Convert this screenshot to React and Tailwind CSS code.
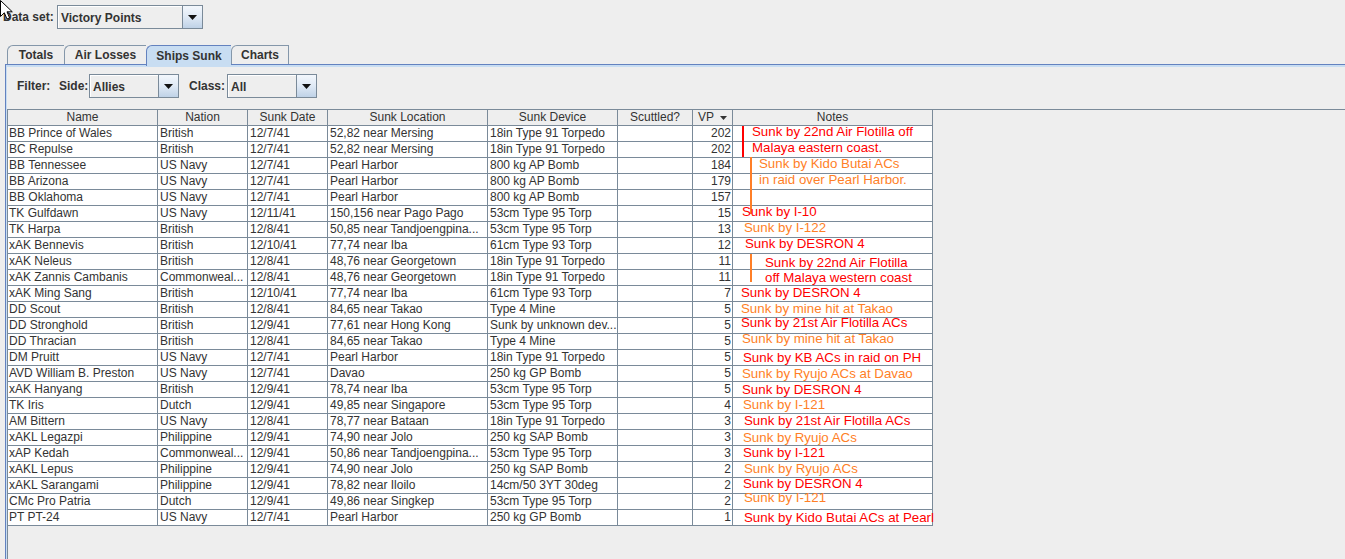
const ROWS = [
  ['BB Prince of Wales', 'British', '12/7/41', '52,82 near Mersing', '18in Type 91 Torpedo', 202],
  ['BC Repulse', 'British', '12/7/41', '52,82 near Mersing', '18in Type 91 Torpedo', 202],
  ['BB Tennessee', 'US Navy', '12/7/41', 'Pearl Harbor', '800 kg AP Bomb', 184],
  ['BB Arizona', 'US Navy', '12/7/41', 'Pearl Harbor', '800 kg AP Bomb', 179],
  ['BB Oklahoma', 'US Navy', '12/7/41', 'Pearl Harbor', '800 kg AP Bomb', 157],
  ['TK Gulfdawn', 'US Navy', '12/11/41', '150,156 near Pago Pago', '53cm Type 95 Torp', 15],
  ['TK Harpa', 'British', '12/8/41', '50,85 near Tandjoengpina...', '53cm Type 95 Torp', 13],
  ['xAK Bennevis', 'British', '12/10/41', '77,74 near Iba', '61cm Type 93 Torp', 12],
  ['xAK Neleus', 'British', '12/8/41', '48,76 near Georgetown', '18in Type 91 Torpedo', 11],
  ['xAK Zannis Cambanis', 'Commonweal...', '12/8/41', '48,76 near Georgetown', '18in Type 91 Torpedo', 11],
  ['xAK Ming Sang', 'British', '12/10/41', '77,74 near Iba', '61cm Type 93 Torp', 7],
  ['DD Scout', 'British', '12/8/41', '84,65 near Takao', 'Type 4 Mine', 5],
  ['DD Stronghold', 'British', '12/9/41', '77,61 near Hong Kong', 'Sunk by unknown dev...', 5],
  ['DD Thracian', 'British', '12/8/41', '84,65 near Takao', 'Type 4 Mine', 5],
  ['DM Pruitt', 'US Navy', '12/7/41', 'Pearl Harbor', '18in Type 91 Torpedo', 5],
  ['AVD William B. Preston', 'US Navy', '12/7/41', 'Davao', '250 kg GP Bomb', 5],
  ['xAK Hanyang', 'British', '12/9/41', '78,74 near Iba', '53cm Type 95 Torp', 5],
  ['TK Iris', 'Dutch', '12/9/41', '49,85 near Singapore', '53cm Type 95 Torp', 4],
  ['AM Bittern', 'US Navy', '12/8/41', '78,77 near Bataan', '18in Type 91 Torpedo', 3],
  ['xAKL Legazpi', 'Philippine', '12/9/41', '74,90 near Jolo', '250 kg SAP Bomb', 3],
  ['xAP Kedah', 'Commonweal...', '12/9/41', '50,86 near Tandjoengpina...', '53cm Type 95 Torp', 3],
  ['xAKL Lepus', 'Philippine', '12/9/41', '74,90 near Jolo', '250 kg SAP Bomb', 2],
  ['xAKL Sarangami', 'Philippine', '12/9/41', '78,82 near Iloilo', '14cm/50 3YT 30deg', 2],
  ['CMc Pro Patria', 'Dutch', '12/9/41', '49,86 near Singkep', '53cm Type 95 Torp', 2],
  ['PT PT-24', 'US Navy', '12/7/41', 'Pearl Harbor', '250 kg GP Bomb', 1],
];

const HEADERS = ['Name', 'Nation', 'Sunk Date', 'Sunk Location', 'Sunk Device', 'Scuttled?', 'VP', 'Notes'];

const RED = 'text-[#ff0000]';
const ORANGE = 'text-[#ff7f27]';

// hand-drawn annotations laid over the Notes column
const NOTES = [
  { pos: 'left-[744px] top-[14px] leading-[16px]', tone: RED, lines: ['Sunk by 22nd Air Flotilla off', 'Malaya eastern coast.'] },
  { pos: 'left-[751px] top-[46px] leading-[16px]', tone: ORANGE, lines: ['Sunk by Kido Butai ACs', 'in raid over Pearl Harbor.'] },
  { pos: 'left-[734px] top-[94px] leading-[16px]', tone: RED, lines: ['Sunk by I-10'] },
  { pos: 'left-[736px] top-[110px] leading-[16px]', tone: ORANGE, lines: ['Sunk by I-122'] },
  { pos: 'left-[737px] top-[126px] leading-[16px]', tone: RED, lines: ['Sunk by DESRON 4'] },
  { pos: 'left-[757px] top-[145px] leading-[15px]', tone: RED, lines: ['Sunk by 22nd Air Flotilla', 'off Malaya western coast'] },
  { pos: 'left-[733px] top-[175px] leading-[16px]', tone: RED, lines: ['Sunk by DESRON 4'] },
  { pos: 'left-[733px] top-[191px] leading-[16px]', tone: ORANGE, lines: ['Sunk by mine hit at Takao'] },
  { pos: 'left-[733px] top-[205px] leading-[16px]', tone: RED, lines: ['Sunk by 21st Air Flotilla ACs'] },
  { pos: 'left-[734px] top-[221px] leading-[16px]', tone: ORANGE, lines: ['Sunk by mine hit at Takao'] },
  { pos: 'left-[735px] top-[240px] leading-[16px]', tone: RED, lines: ['Sunk by KB ACs in raid on PH'] },
  { pos: 'left-[734px] top-[256px] leading-[16px]', tone: ORANGE, lines: ['Sunk by Ryujo ACs at Davao'] },
  { pos: 'left-[734px] top-[272px] leading-[16px]', tone: RED, lines: ['Sunk by DESRON 4'] },
  { pos: 'left-[735px] top-[287px] leading-[16px]', tone: ORANGE, lines: ['Sunk by I-121'] },
  { pos: 'left-[736px] top-[303px] leading-[16px]', tone: RED, lines: ['Sunk by 21st Air Flotilla ACs'] },
  { pos: 'left-[735px] top-[320px] leading-[16px]', tone: ORANGE, lines: ['Sunk by Ryujo ACs'] },
  { pos: 'left-[735px] top-[335px] leading-[16px]', tone: RED, lines: ['Sunk by I-121'] },
  { pos: 'left-[736px] top-[351px] leading-[16px]', tone: ORANGE, lines: ['Sunk by Ryujo ACs'] },
  { pos: 'left-[735px] top-[366px] leading-[16px]', tone: RED, lines: ['Sunk by DESRON 4'] },
  { pos: 'left-[736px] top-[380px] leading-[16px]', tone: ORANGE, lines: ['Sunk by I-121'] },
  { pos: 'left-[736px] top-[400px] leading-[16px]', tone: RED, lines: ['Sunk by Kido Butai ACs at Pearl'] },
];

const BARS = [
  'left-[734px] top-[16px] h-[31px] bg-[#ff0000]',
  'left-[742px] top-[47px] h-[57px] bg-[#ff7f27]',
  'left-[742px] top-[144px] h-[28px] bg-[#ff7f27]',
];

const COLS = 'grid grid-cols-[150px_90px_80px_160px_130px_75px_40px_200px]';

const TABS = [
  { label: 'Totals', w: 'w-[57px]' },
  { label: 'Air Losses', w: 'w-[82px]' },
  { label: 'Ships Sunk', w: 'w-[85px]', active: true },
  { label: 'Charts', w: 'w-[58px]', last: true },
];

function Combo({ value, w }) {
  return (
    <div className={`flex h-[24px] border border-[#7a8a99] bg-[#eeeeee] ${w}`}>
      <div className="flex flex-1 items-center border-l border-t border-white pl-[2px] font-bold text-[#333]">
        {value}
      </div>
      <div className="flex w-[20px] items-center justify-center border-l border-[#7a8a99] bg-gradient-to-b from-[#f3f7fc] via-[#dfe9f5] to-[#bfd2e7]">
        <svg width="9" height="5" viewBox="0 0 9 5">
          <path d="M0 0h9L4.5 5z" fill="#111" />
        </svg>
      </div>
    </div>
  );
}

function Cursor() {
  return (
    <svg className="absolute left-0 top-0 z-20" width="13" height="20" viewBox="0 0 13 20">
      <path d="M0.5 0.5V16.5L4.3 12.8L7 19L9.6 17.9L7 11.8H12.3Z" fill="#fff" stroke="#000" strokeWidth="1" strokeLinejoin="miter" />
    </svg>
  );
}

export default function App() {
  return (
    <div className="relative flex h-[559px] w-[1345px] flex-col overflow-hidden bg-[#eeeeee] font-['Liberation_Sans',Arial,sans-serif] text-[12px] text-[#333333]">
      <Cursor />

      {/* Data set */}
      <div className="mt-[5px] flex h-[24px] items-center pl-[3px]">
        <span className="w-[54px] font-bold">Data set:</span>
        <Combo value="Victory Points" w="w-[146px]" />
      </div>

      {/* Tabs */}
      <div className="relative z-10 mt-[16px] flex h-[19px] pl-[7px]">
        {TABS.map(({ label, w, active, last }) => (
          <div
            key={label}
            className={`flex items-center justify-center rounded-tl-[6px] border-l border-t font-bold ${w} ${
              last ? 'border-r' : ''
            } ${active ? 'h-[21px] border-[#6382bf] bg-[#c8ddf2]' : 'h-[19px] border-[#8497aa]'}`}
          >
            {label}
          </div>
        ))}
      </div>

      {/* Tab content */}
      <div className="ml-[5px] flex flex-1 flex-col border-l border-t border-[#6382bf]">
        <div className="flex flex-1 flex-col border-l border-t-2 border-[#c8ddf2]">
          <div className="ml-[10px] mt-[7px] flex h-[24px] items-center">
            <span className="w-[42px] font-bold">Filter:</span>
            <span className="w-[30px] font-bold">Side:</span>
            <Combo value="Allies" w="w-[90px]" />
            <span className="ml-[10px] w-[38px] font-bold">Class:</span>
            <Combo value="All" w="w-[90px]" />
          </div>

          <div className="mt-[11px] flex-1 border-l border-t border-[#7a8a99]">
            <div className="relative w-[925px]">
              <div className={`${COLS} h-[16px] bg-[#eeeeee]`}>
                {HEADERS.map((h) => (
                  <div
                    key={h}
                    className="flex items-center justify-center border-b border-r border-[#7a8a99] leading-[15px]"
                  >
                    {h}
                    {h === 'VP' && (
                      <svg className="ml-[6px]" width="7" height="4" viewBox="0 0 7 4">
                        <path d="M0 0h7L3.5 4z" fill="#333" />
                      </svg>
                    )}
                  </div>
                ))}
              </div>

              {ROWS.map((r) => (
                <div key={r[0]} className={`${COLS} h-[16px] bg-white`}>
                  <div className="overflow-hidden whitespace-nowrap border-b border-r border-[#7a8a99] pl-[1px] leading-[15px]">{r[0]}</div>
                  <div className="overflow-hidden whitespace-nowrap border-b border-r border-[#7a8a99] pl-[2px] leading-[15px]">{r[1]}</div>
                  <div className="overflow-hidden whitespace-nowrap border-b border-r border-[#7a8a99] pl-[2px] leading-[15px]">{r[2]}</div>
                  <div className="overflow-hidden whitespace-nowrap border-b border-r border-[#7a8a99] pl-[2px] leading-[15px]">{r[3]}</div>
                  <div className="overflow-hidden whitespace-nowrap border-b border-r border-[#7a8a99] pl-[2px] leading-[15px]">{r[4]}</div>
                  <div className="border-b border-r border-[#7a8a99]" />
                  <div className="border-b border-r border-[#7a8a99] pr-[1px] text-right leading-[15px]">{r[5]}</div>
                  <div className="border-b border-r border-[#7a8a99]" />
                </div>
              ))}

              <div className="pointer-events-none absolute inset-0">
                {BARS.map((b) => (
                  <div key={b} className={`absolute w-[2px] ${b}`} />
                ))}
                {NOTES.map((n) => (
                  <div key={n.pos} className={`absolute whitespace-nowrap text-[13.3px] ${n.pos} ${n.tone}`}>
                    {n.lines.map((l) => (
                      <div key={l}>{l}</div>
                    ))}
                  </div>
                ))}
              </div>
            </div>
          </div>
        </div>
      </div>
    </div>
  );
}
